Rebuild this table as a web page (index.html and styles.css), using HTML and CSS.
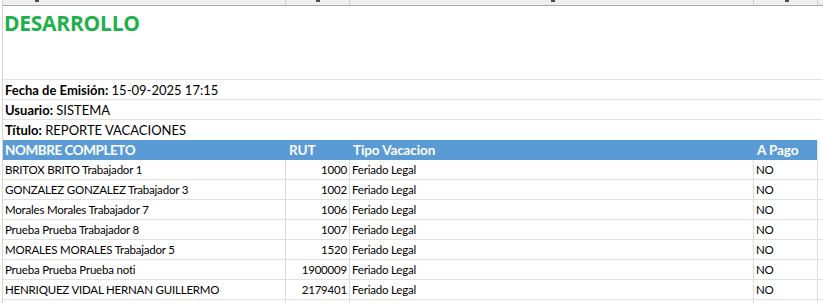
FILE: index.html
```html
<!DOCTYPE html>
<html lang="es">
<head>
<meta charset="utf-8">
<title>Reporte Vacaciones</title>
<link rel="stylesheet" href="styles.css">
</head>
<body>
<div class="sheet">
  <div class="grid strip">
    <div class="c"><span class="mark m1"></span></div>
    <div class="c"><span class="mark m2"></span></div>
    <div class="c"><span class="mark m3"></span></div>
    <div class="c"><span class="mark m4"></span></div>
    <div class="c e"></div>
  </div>
  <div class="banner"><span class="brand">DESARROLLO</span></div>
  <div class="info"><b>Fecha de Emisión:</b> 15-09-2025 17:15</div>
  <div class="info"><b>Usuario:</b> SISTEMA</div>
  <div class="info last"><b>Título:</b> REPORTE VACACIONES</div>
  <div class="grid head">
    <div class="c caps">NOMBRE COMPLETO</div>
    <div class="c">RUT</div>
    <div class="c">Tipo Vacacion</div>
    <div class="c">A Pago</div>
    <div class="c e"></div>
  </div>
  <div class="grid row">
    <div class="c">BRITOX BRITO Trabajador 1</div>
    <div class="c num">1000</div>
    <div class="c">Feriado Legal</div>
    <div class="c">NO</div>
    <div class="c e"></div>
  </div>
  <div class="grid row">
    <div class="c">GONZALEZ GONZALEZ Trabajador 3</div>
    <div class="c num">1002</div>
    <div class="c">Feriado Legal</div>
    <div class="c">NO</div>
    <div class="c e"></div>
  </div>
  <div class="grid row">
    <div class="c">Morales Morales Trabajador 7</div>
    <div class="c num">1006</div>
    <div class="c">Feriado Legal</div>
    <div class="c">NO</div>
    <div class="c e"></div>
  </div>
  <div class="grid row">
    <div class="c">Prueba Prueba Trabajador 8</div>
    <div class="c num">1007</div>
    <div class="c">Feriado Legal</div>
    <div class="c">NO</div>
    <div class="c e"></div>
  </div>
  <div class="grid row">
    <div class="c">MORALES MORALES Trabajador 5</div>
    <div class="c num">1520</div>
    <div class="c">Feriado Legal</div>
    <div class="c">NO</div>
    <div class="c e"></div>
  </div>
  <div class="grid row active">
    <div class="c">Prueba Prueba Prueba noti</div>
    <div class="c num">1900009</div>
    <div class="c">Feriado Legal</div>
    <div class="c">NO</div>
    <div class="c e"></div>
  </div>
  <div class="grid row">
    <div class="c">HENRIQUEZ VIDAL HERNAN GUILLERMO</div>
    <div class="c num">2179401</div>
    <div class="c">Feriado Legal</div>
    <div class="c">NO</div>
    <div class="c e"></div>
  </div>
  <div class="grid row tail">
    <div class="c"></div>
    <div class="c"></div>
    <div class="c"></div>
    <div class="c"></div>
    <div class="c e"></div>
  </div>
</div>
</body>
</html>
```
FILE: styles.css
```css
* { box-sizing: border-box; }
html, body { margin: 0; padding: 0; background: #ffffff; }
body {
  width: 823px;
  height: 303px;
  overflow: hidden;
  font-family: Lato, "Open Sans", sans-serif;
  color: #000;
}
.sheet {
  margin-left: 2px;
  border-left: 1px solid #d4d4d4;
  height: 303px;
  overflow: hidden;
}
.grid {
  display: grid;
  grid-template-columns: 283px 64px 404px 64px 1fr;
}
.grid .c {
  border-right: 1px solid #dcdcdc;
  white-space: nowrap;
  overflow: hidden;
}
.grid .c.e { border-right: none; }

/* column header strip at top */
.strip {
  height: 6px;
  background: #efefef;
  border-bottom: 1px solid #ababab;
}
.strip .c { border-right-color: #d0d0d0; position: relative; }
.mark {
  position: absolute;
  top: 0;
  width: 4px;
  height: 2px;
  background: #4a4a5a;
}
.m1 { left: 32px; }
.m2 { left: 30px; }
.m3 { left: 201px; }
.m4 { left: 31px; }

.banner {
  height: 74px;
  border-bottom: 1px solid #e1e1e1;
  padding: 3px 0 0 1px;
}
.brand {
  font-family: "Open Sans", Lato, sans-serif;
  font-weight: 700;
  font-size: 21px;
  letter-spacing: -0.25px;
  color: #1eb04a;
}
.info {
  height: 20px;
  border-bottom: 1px solid #e1e1e1;
  padding: 1px 0 0 2px;
  font-size: 13px;
  line-height: 18px;
}
.info.last { border-bottom: none; }
.info b { font-weight: 700; }

.head {
  height: 20px;
  background: #5b9bd5;
  color: #ffffff;
  font-weight: 700;
  font-size: 13.5px;
  letter-spacing: -0.1px;
  line-height: 20px;
}
.head .c { border-right: none; padding-left: 2px; }
.head .c.caps { letter-spacing: -0.45px; }
.head .c:nth-child(4) { border-right: 1px solid #e1e1e1; }
.head .c:nth-child(2) { padding-left: 3px; }
.head .c:nth-child(3) { padding-left: 3px; }
.head .c:nth-child(4) { padding-left: 3px; }
.head .c.e { background: #ffffff; }

.row {
  height: 20px;
  border-bottom: 1px solid #e1e1e1;
  font-size: 11.5px;
  letter-spacing: -0.2px;
  line-height: 20px;
}
.row .c { padding-left: 2px; }
.row .c.num { text-align: right; padding-right: 2px; padding-left: 0; }
.row.active { position: relative; }
.row.active::before {
  content: "";
  position: absolute;
  left: -3px;
  top: 0;
  width: 2px;
  height: 20px;
  background: #217346;
}
.tail { border-bottom: none; }
```
